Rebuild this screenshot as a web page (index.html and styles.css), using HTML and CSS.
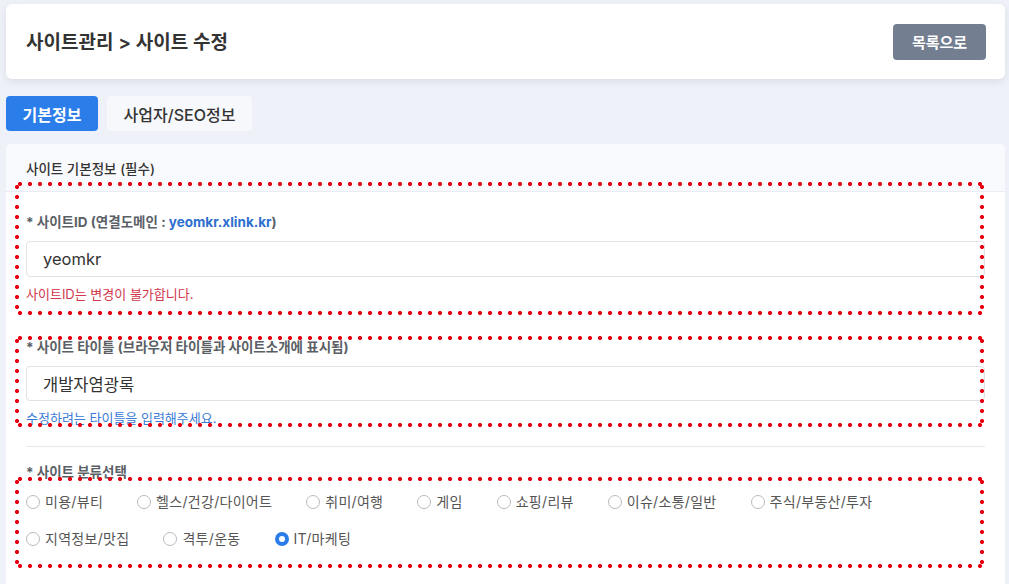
FILE: index.html
```html
<!DOCTYPE html>
<html lang="ko">
<head>
  <meta charset="UTF-8">
  <meta name="viewport" content="width=device-width, initial-scale=1.0">
  <title>사이트 수정</title>
  <link rel="stylesheet" href="styles.css">
</head>
<body>
  <header class="page-header">
    <h1>사이트관리 &gt; 사이트 수정</h1>
    <button class="btn-list">목록으로</button>
  </header>

  <nav class="tabs">
    <button class="tab active">기본정보</button>
    <button class="tab">사업자/SEO정보</button>
  </nav>

  <section class="card">
    <div class="card-header">사이트 기본정보 (필수)</div>
    <div class="card-body">
      <div class="field field-id mark">
        <label class="field-label">* 사이트ID (연결도메인 : <span class="domain">yeomkr.xlink.kr</span>)</label>
        <input class="text-input" type="text" value="yeomkr" readonly>
        <p class="help help-error">사이트ID는 변경이 불가합니다.</p>
      </div>

      <div class="field field-title mark">
        <label class="field-label">* 사이트 타이틀 (브라우저 타이틀과 사이트소개에 표시됨)</label>
        <input class="text-input" type="text" value="개발자염광록">
        <p class="help help-info">수정하려는 타이틀을 입력해주세요.</p>
      </div>

      <hr class="divider">

      <div class="field field-category">
        <label class="field-label">* 사이트 분류선택</label>
        <div class="radio-group mark">
          <div class="radio-row">
            <label class="radio"><input type="radio" name="cat"> 미용/뷰티</label>
            <label class="radio"><input type="radio" name="cat"> 헬스/건강/다이어트</label>
            <label class="radio"><input type="radio" name="cat"> 취미/여행</label>
            <label class="radio"><input type="radio" name="cat"> 게임</label>
            <label class="radio"><input type="radio" name="cat"> 쇼핑/리뷰</label>
            <label class="radio"><input type="radio" name="cat"> 이슈/소통/일반</label>
            <label class="radio"><input type="radio" name="cat"> 주식/부동산/투자</label>
          </div>
          <div class="radio-row">
            <label class="radio"><input type="radio" name="cat"> 지역정보/맛집</label>
            <label class="radio"><input type="radio" name="cat"> 격투/운동</label>
            <label class="radio"><input type="radio" name="cat" checked> IT/마케팅</label>
          </div>
        </div>
      </div>
    </div>
  </section>
</body>
</html>
```

FILE: styles.css
```css
:root {
  --bg: #eef1f8;
  --primary: #2b7de9;
  --text: #333;
  --muted: #555;
  --border: #dfe2e6;
  --mark: #e60012;
}

* {
  margin: 0;
  padding: 0;
  box-sizing: border-box;
}

body {
  font-family: "Inter", "Noto Sans CJK KR", sans-serif;
  color: var(--text);
  background-color: var(--bg);
  padding: 4px 4px 0 6px;
  overflow: hidden;
}

button {
  font-family: inherit;
  border: none;
  cursor: pointer;
}

.page-header {
  height: 75px;
  background-color: #fff;
  border-radius: 6px;
  box-shadow: 0 3px 8px rgba(0, 0, 0, 0.08);
  display: flex;
  align-items: center;
  justify-content: space-between;
  padding: 0 19px 0 20px;
}

.page-header h1 {
  font-size: 19px;
  font-weight: 600;
  color: #333;
  padding-bottom: 3px;
}

.btn-list {
  width: 93px;
  height: 36px;
  background-color: #737e91;
  color: #fff;
  font-size: 15px;
  font-weight: 700;
  border-radius: 4px;
}

.tabs {
  display: flex;
  gap: 9px;
  margin-top: 17px;
}

.tab {
  height: 35px;
  padding: 0 12px;
  border-radius: 4px;
  font-size: 16px;
  font-weight: 500;
  background-color: #f6f8fb;
  color: #333;
}

.tab.active {
  width: 92px;
  background-color: var(--primary);
  color: #fff;
  font-weight: 700;
}

.tab:not(.active) {
  width: 145px;
}

.card {
  margin-top: 13px;
  background-color: #fff;
  border-radius: 6px 6px 0 0;
  height: 460px;
}

.card-header {
  height: 48px;
  background-color: #f9fafd;
  border-bottom: 1px solid #eaecf1;
  border-radius: 6px 6px 0 0;
  padding: 0 20px;
  display: flex;
  align-items: center;
  font-size: 13.5px;
  font-weight: 500;
  color: #333;
}

.card-body {
  padding: 0 20px;
}

.field {
  position: relative;
}

.field-label {
  display: block;
  font-size: 13.5px;
  line-height: 20px;
  font-weight: 700;
  color: #5b5f66;
}

.domain {
  color: #2d6fd0;
}

.text-input {
  display: block;
  width: 100%;
  height: 36px;
  margin-top: 9px;
  padding: 0 16px;
  border: 1px solid var(--border);
  border-radius: 4px;
  font-family: inherit;
  font-size: 16.5px;
  color: #333;
  outline: none;
}

.help {
  margin-top: 8px;
  font-size: 13px;
  line-height: 18px;
}

.help-error {
  color: #d1364a;
}

.help-info {
  color: #3a7bd5;
}

.field-id {
  padding-top: 20px;
}

.field-title {
  margin-top: 34px;
}

.field-title .text-input {
  margin-top: 9px;
  height: 35px;
}

.divider {
  border: none;
  border-top: 1px solid #e6e8ec;
  margin-top: 19px;
}

.field-category {
  margin-top: 15px;
}

.radio-group {
  position: relative;
  margin-top: 10px;
  display: flex;
  flex-direction: column;
  gap: 17px;
}

.radio-row {
  display: flex;
  gap: 34px;
}

.radio {
  display: flex;
  align-items: center;
  gap: 5px;
  font-size: 14px;
  line-height: 20px;
  letter-spacing: 0.3px;
  color: #555;
}

.radio input {
  appearance: none;
  width: 14px;
  height: 14px;
  border: 1px solid #bbb;
  border-radius: 50%;
  background-color: #fff;
}

.radio input:checked {
  border: 4px solid var(--primary);
}

/* red dotted annotation boxes */
.mark::after {
  content: "";
  position: absolute;
  pointer-events: none;
  background:
    radial-gradient(circle, var(--mark) 1.8px, transparent 2.3px) left top / 10px 4px repeat-x,
    radial-gradient(circle, var(--mark) 1.8px, transparent 2.3px) left bottom / 10px 4px repeat-x,
    radial-gradient(circle, var(--mark) 1.8px, transparent 2.3px) left top / 4px 10px repeat-y,
    radial-gradient(circle, var(--mark) 1.8px, transparent 2.3px) right top / 4px 10px repeat-y;
}

.field-id::after {
  top: -10px;
  bottom: -12px;
  left: -11px;
  right: 1px;
}

.field-title::after {
  top: -1px;
  bottom: 0;
  left: -11px;
  right: 1px;
}

.radio-group::after {
  top: -15px;
  bottom: -19px;
  left: -11px;
  right: 1px;
}
```
